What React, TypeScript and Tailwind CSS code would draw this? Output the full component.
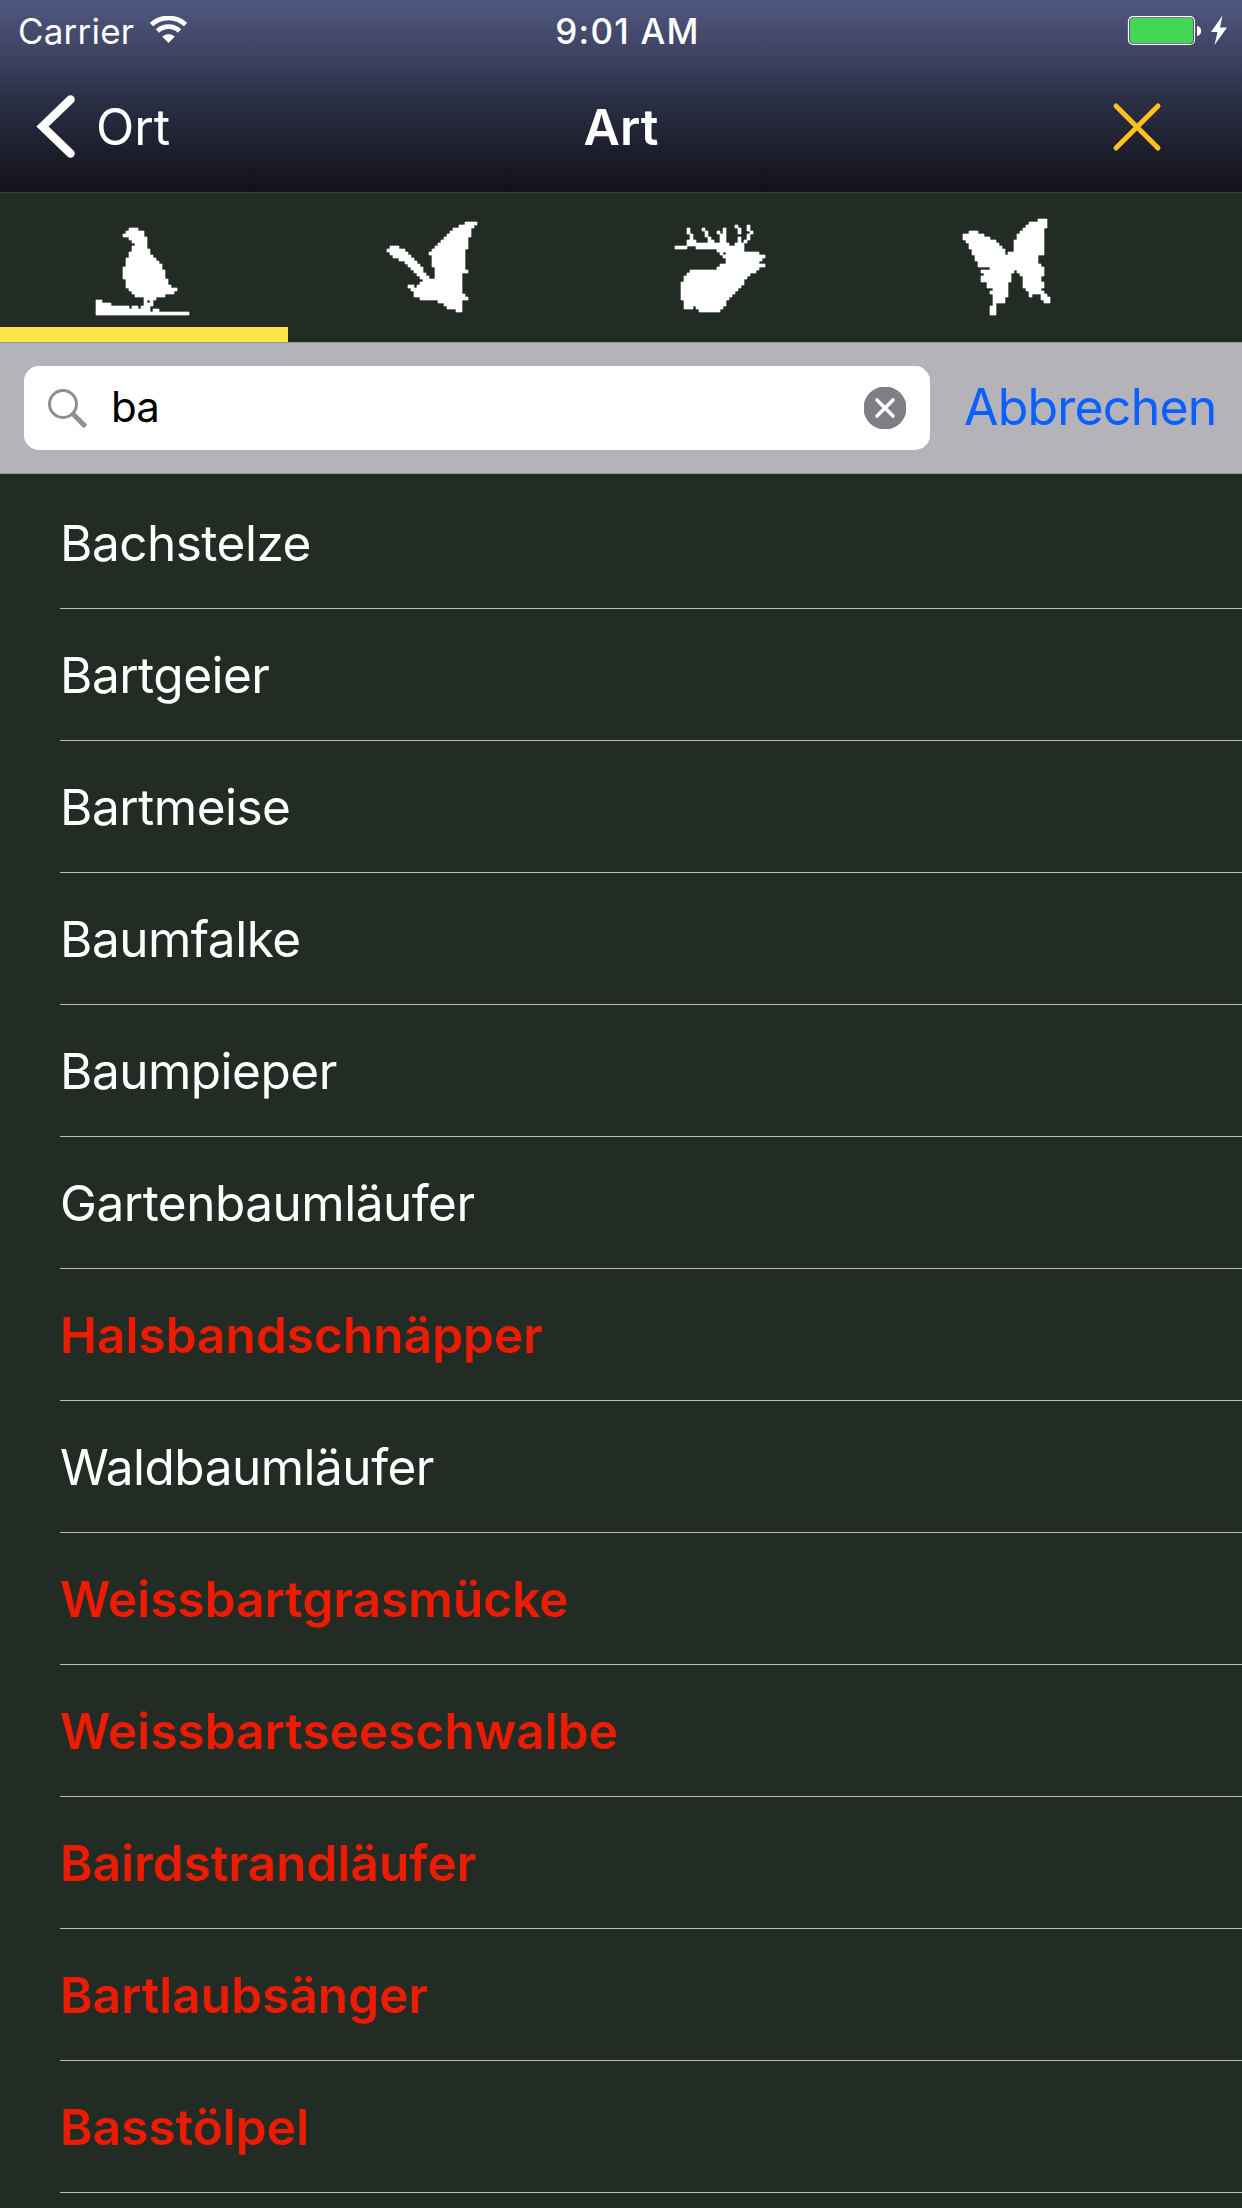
import { useState } from 'react';

import clsx from 'clsx';

interface Species {
  name: string;
  rare?: boolean;
}

const SPECIES: Species[] = [
  { name: 'Bachstelze' },
  { name: 'Bartgeier' },
  { name: 'Bartmeise' },
  { name: 'Baumfalke' },
  { name: 'Baumpieper' },
  { name: 'Gartenbaumläufer' },
  { name: 'Halsbandschnäpper', rare: true },
  { name: 'Waldbaumläufer' },
  { name: 'Weissbartgrasmücke', rare: true },
  { name: 'Weissbartseeschwalbe', rare: true },
  { name: 'Bairdstrandläufer', rare: true },
  { name: 'Bartlaubsänger', rare: true },
  { name: 'Basstölpel', rare: true },
];

// silhouettes are drawn on a 9 unit grid
const GROUPS = [
  {
    id: 'Vögel',
    viewBox: '12 0 360 360',
    path: 'M147 54H174V63H192V81H201V117H210V135H219V144H228V153H237V162H246V180H255V207H264V225H273V234H291V243H282V252H255V261H228V270H219V288H210V306H219V297H237V306H327V315H48V270H66V279H93V288H147V297H156V288H174V297H183V288H192V261H165V252H156V243H147V234H138V207H129V171H138V144H147V126H156V108H165V99H156V90H147V81H129V72H138V63H147ZM201 270V279H210V270Z',
  },
  {
    id: 'Fledermäuse',
    viewBox: '-9 0 360 360',
    path: 'M270 36H306V45H297V54H288V81H279V117H270V180H279V189H261V252H270V261H279V270H261V306H243V297H216V288H207V279H189V270H135V261H117V243H108V234H99V225H117V234H126V225H135V216H144V207H135V198H126V189H117V180H108V171H99V162H90V153H72V144H54V135H45V126H36V117H45V108H72V117H90V126H99V135H108V144H117V153H126V162H135V171H144V189H153V198H162V207H180V171H171V135H162V126H171V117H180V108H189V99H198V90H207V81H216V72H225V63H234V54H252V45H270Z',
  },
  {
    id: 'Säugetiere',
    viewBox: '-15 0 360 360',
    path: 'M75 180H156V171H165V162H183V144H174V135H165V126H156V117H93V108H66V117H30V108H66V90H75V72H66V54H75V72H84V90H93V99H129V81H120V63H111V54H120V63H129V81H138V90H147V99H165V72H156V63H165V72H174V54H183V99H192V108H210V99H219V81H228V99H237V90H246V72H255V63H246V45H255V63H264V72H255V90H246V99H237V126H282V135H300V144H291V153H282V162H300V171H282V180H273V189H255V198H246V207H237V225H228V234H219V243H210V252H201V261H192V270H183V288H174V297H165V306H102V297H93V288H84V297H57V270H48V216H57V198H66V189H75ZM174 126V135H183V126ZM210 45H219V54H228V72H219V54H210Z',
  },
  {
    id: 'Schmetterlinge',
    viewBox: '-6 0 360 360',
    path: 'M264 27H291V54H282V135H264V162H273V171H282V198H273V216H282V234H273V243H282V252H291V261H300V279H282V270H273V252H246V261H237V243H228V234H219V198H210V189H201V180H192V189H183V216H174V261H165V279H138V315H120V288H129V252H120V243H129V234H111V216H93V198H102V189H93V180H120V171H84V153H75V135H66V117H57V99H48V90H39V72H57V63H84V72H102V81H120V90H138V99H147V108H156V117H165V135H174V126H192V90H201V72H210V63H219V54H228V45H237V36H264Z',
  },
];

const StatusBar = () => (
  <div className="grid h-[60px] grid-cols-3 items-center pt-[2px]">
    <div className="flex items-center gap-[16px] pl-[18px]">
      <span className="text-[35px] leading-[42px] tracking-[0.2px]">Carrier</span>
      <svg className="-mt-[4px] h-[27px] w-[37px]" viewBox="0 0 37 27" fill="none">
        <path d="M1.5 8.5A25 25 0 0 1 35.5 8.5" stroke="currentColor" strokeWidth="4.6" />
        <path d="M7.5 15A16 16 0 0 1 29.5 15" stroke="currentColor" strokeWidth="4.6" />
        <path d="M12.2 20.6Q18.5 15.2 24.8 20.6L18.5 27Z" fill="currentColor" />
      </svg>
    </div>
    <span className="pl-[13px] text-center text-[35px] leading-[42px] font-medium tracking-[1.2px]">9:01 AM</span>
    <div className="-mt-[2px] flex items-center justify-end pr-[15px]">
      <svg className="h-[30px] w-[100px]" viewBox="0 0 100 30">
        <rect x="1.5" y="1.6" width="66" height="27.8" rx="4.5" fill="none" stroke="#fff" strokeWidth="1.2" />
        <rect x="3" y="3" width="63" height="25" rx="3" fill="#44d755" />
        <path d="M70 11C75.5 11.5 75.5 20.5 70 21Z" fill="#fff" />
        <path d="M95.500 0.500L84 17H90.500L87.500 30L100 12.500H93Z" fill="#fff" />
      </svg>
    </div>
  </div>
);

const NavBar = () => (
  <div className="grid h-[132px] grid-cols-3 items-center text-[50px]">
    <button className="flex items-center pl-[36px] text-left">
      <svg className="h-[63px] w-[39px]" viewBox="0 0 39 63" fill="none">
        <path d="M34.500 4.500L6.500 31.500L34.500 58.500" stroke="#fff" strokeWidth="8.500" strokeLinecap="round" />
      </svg>
      <span className="pt-[2px] pl-[21px]">Ort</span>
    </button>
    <h1 className="pt-[2px] text-center font-semibold">Art</h1>
    <button className="flex justify-end pt-[1px] pr-[80px]">
      <svg className="h-[50px] w-[50px]" viewBox="0 0 50 50">
        <path d="M4 4L46 46M46 4L4 46" stroke="#ffc020" strokeWidth="5" strokeLinecap="round" />
      </svg>
    </button>
  </div>
);

const GroupTabs = () => {
  const [active, setActive] = useState('Vögel');

  return (
    <nav className="flex h-[150px] border-t border-[#394139]">
      {GROUPS.map(({ id, viewBox, path }) => (
        <button
          key={id}
          onClick={() => setActive(id)}
          className={clsx('flex w-[288px] justify-center border-b-[15px] pt-[17px]', {
            'border-[#fde545]': id === active,
            'border-transparent': id !== active,
          })}
        >
          <svg className="h-[120px] w-[120px] shrink-0" viewBox={viewBox}>
            <path d={path} fill="#fff" fillRule="evenodd" stroke="#fff" strokeWidth="2" strokeLinejoin="round" />
          </svg>
        </button>
      ))}
    </nav>
  );
};

const SearchBar = () => (
  <div className="flex h-[132px] items-center border-y border-[#98989b] bg-[#b4b3ba] pl-[24px]">
    <div className="flex h-[84px] w-[906px] items-center rounded-[15px] bg-white pr-[24px] pl-[24px]">
      <svg className="h-[39px] w-[39px]" viewBox="0 0 39 39" fill="none" stroke="#8e8e93">
        <circle cx="15" cy="15" r="13.500" strokeWidth="3" />
        <path d="M25 25L37.500 37.500" strokeWidth="5" />
      </svg>
      <span className="flex-1 pb-[4px] pl-[24px] text-[42px] tracking-[-1px] text-black">ba</span>
      <svg className="h-[42px] w-[42px]" viewBox="0 0 42 42">
        <circle cx="21" cy="21" r="21.500" fill="#7f7e85" />
        <path d="M13 13L29 29M29 13L13 29" stroke="#fff" strokeWidth="3.600" strokeLinecap="round" />
      </svg>
    </div>
    <button className="pb-[2px] pl-[34px] text-[50px] tracking-[-0.8px] text-[#0a60ff]">Abbrechen</button>
  </div>
);

export default function App() {
  return (
    <div className="h-[2208px] w-[1242px] overflow-hidden bg-[#222b24] font-['Inter','Liberation_Sans',sans-serif] text-white">
      <header className="bg-[linear-gradient(#50587f,#3f4262_28%,#2b2f45_52%,#1c1d2b_80%,#11111a)]">
        <StatusBar />
        <NavBar />
      </header>
      <GroupTabs />
      <SearchBar />
      <ul className="pt-[3px] pl-[60px]">
        {SPECIES.map(({ name, rare }) => (
          <li
            key={name}
            className={clsx('flex h-[132px] items-center border-b border-[#bab9c0] pt-[2px] text-[49.5px]', {
              'font-semibold tracking-[0.05px] text-[#ec1c04]': rare,
              'tracking-[-0.5px]': !rare,
            })}
          >
            {name}
          </li>
        ))}
      </ul>
    </div>
  );
}
